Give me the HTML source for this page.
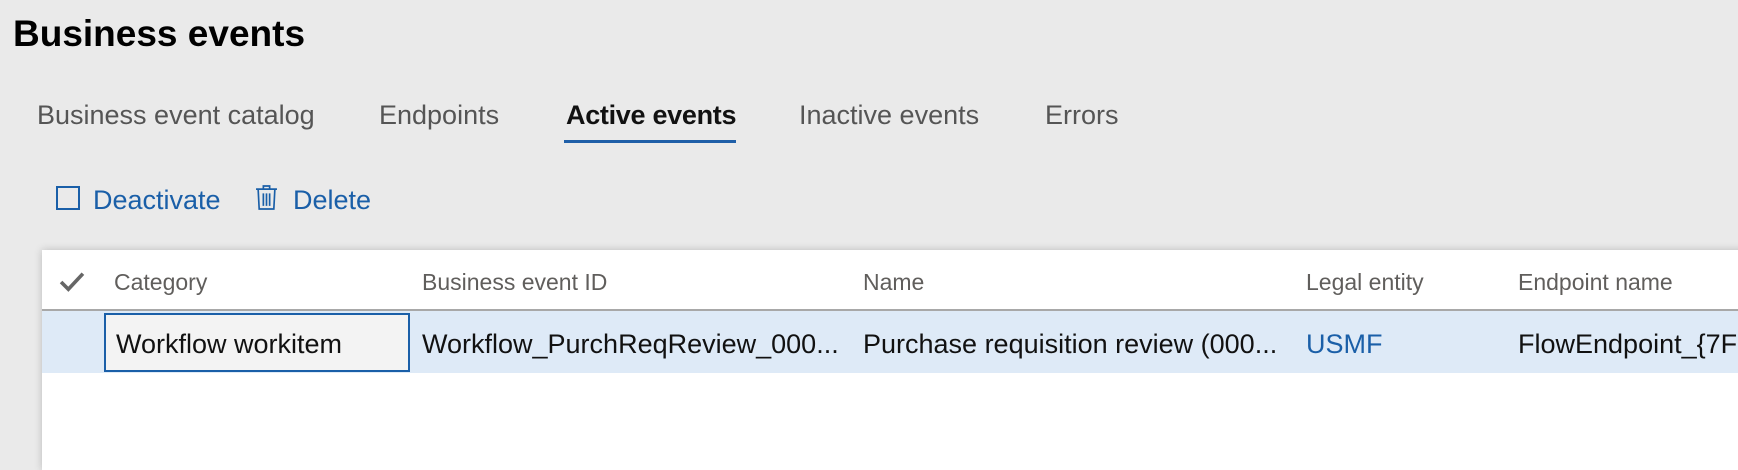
<!DOCTYPE html>
<html><head><style>
body{margin:0;width:1738px;height:436px;background:#eaeaea;font-family:"Segoe UI","Liberation Sans",sans-serif;overflow:hidden;position:relative}
.a{position:absolute;white-space:nowrap}
.t{font-size:27px;color:#555;top:100px}
.h{font-size:23px;color:#605e5c;top:269px}
.r{font-size:27px;color:#111;top:329px}
</style></head><body>
<div class="a" style="left:13px;top:13px;font-size:37px;font-weight:bold;color:#000">Business events</div>
<div class="a t" style="left:37px">Business event catalog</div>
<div class="a t" style="left:379px">Endpoints</div>
<div class="a t" style="left:566px;color:#111;font-weight:bold;letter-spacing:-0.3px">Active events</div>
<div class="a" style="left:564px;top:140px;width:172px;height:3px;background:#1f5fa8"></div>
<div class="a t" style="left:799px">Inactive events</div>
<div class="a t" style="left:1045px">Errors</div>
<div class="a" style="left:56px;top:186px;width:24px;height:24px;border:2px solid #1a5fa8;box-sizing:border-box"></div>
<div class="a" style="left:93px;top:185px;font-size:27px;color:#1a5fa8">Deactivate</div>
<svg class="a" style="left:255px;top:183px" width="23" height="29" viewBox="0 0 22 26" fill="none" stroke="#1a5fa8" stroke-width="1.6"><path d="M1 5h20M8 5V2h6v3M3 5l1 19h14l1-19M8 9v12M11 9v12M14 9v12"/></svg>
<div class="a" style="left:293px;top:185px;font-size:27px;color:#1a5fa8">Delete</div>
<div class="a" style="left:42px;top:250px;width:1710px;height:220px;background:#fff;box-shadow:0 0 8px rgba(0,0,0,.2)"></div>
<div class="a" style="left:42px;top:309px;width:1710px;height:2px;background:#a8a8a8"></div>
<div class="a" style="left:42px;top:311px;width:1710px;height:62px;background:#deeaf7"></div>
<svg class="a" style="left:59px;top:271px" width="26" height="22" viewBox="0 0 25 20"><path d="M2 10l7 7L23 2" fill="none" stroke="#666" stroke-width="3.5"/></svg>
<div class="a h" style="left:114px">Category</div>
<div class="a h" style="left:422px">Business event ID</div>
<div class="a h" style="left:863px">Name</div>
<div class="a h" style="left:1306px">Legal entity</div>
<div class="a h" style="left:1518px">Endpoint name</div>
<div class="a" style="left:104px;top:313px;width:306px;height:59px;border:2px solid #1a5fa8;box-sizing:border-box;background:#f3f3f3"></div>
<div class="a r" style="left:116px">Workflow workitem</div>
<div class="a r" style="left:422px">Workflow_PurchReqReview_000...</div>
<div class="a r" style="left:863px">Purchase requisition review (000...</div>
<div class="a r" style="left:1306px;color:#1a5fa8">USMF</div>
<div class="a r" style="left:1518px">FlowEndpoint_{7F3</div>
</body></html>
